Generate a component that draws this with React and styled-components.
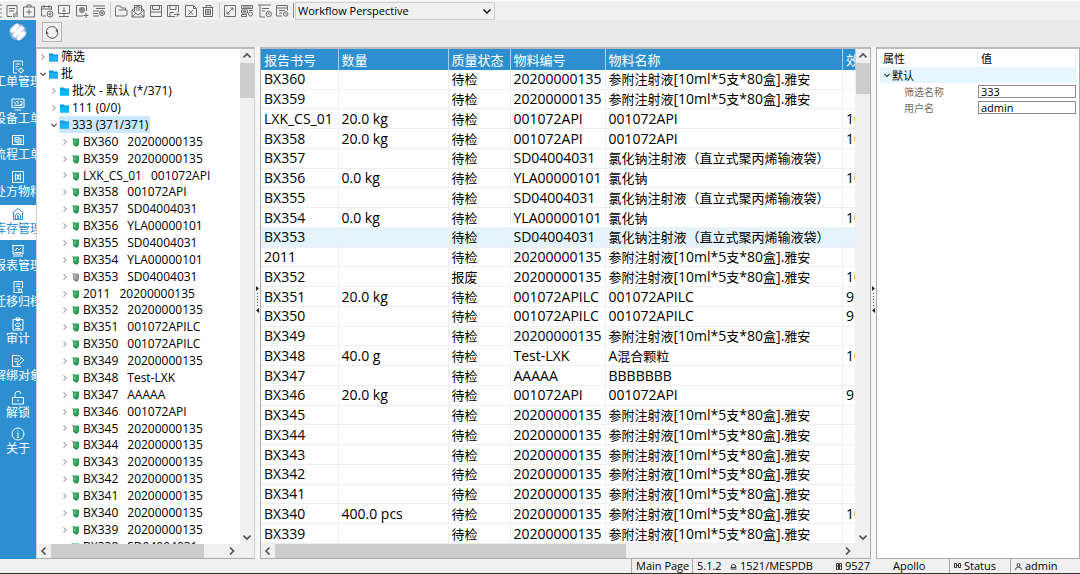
import React, { useState } from "react";
import styled, { createGlobalStyle } from "styled-components";

const GlobalStyle = createGlobalStyle`
  * { box-sizing: border-box; }
  body {
    margin: 0;
    background: #f0f0f0;
    color: #000;
    font-family: "Open Sans", "Noto Sans CJK SC", sans-serif;
    font-size: 12px;
  }
  button, input, select {
    font-family: inherit;
    color: inherit;
    margin: 0;
    padding: 0;
  }
`;

const Page = styled.div`
  display: flex;
  flex-direction: column;
  height: 100vh;
  overflow: hidden;
  border-bottom: 1px solid #333;
`;
const Toolbar = styled.header`
  display: flex;
  align-items: center;
  flex: none;
  height: 20px;
  border-top: 1px solid #fafafa;
`;
const Grip = styled.div`
  width: 3px;
  height: 14px;
  border-left: 2px dotted #b8b8b8;
`;
const ToolGroup = styled.div`
  display: grid;
  grid-template-columns: repeat(${(p) => p.$count}, 1fr);
  width: ${(p) => p.$width}px;
  height: 16px;
`;
const ToolButton = styled.button`
  display: flex;
  align-items: center;
  justify-content: center;
  border: none;
  background: none;
`;
const Separator = styled.div`
  width: 1px;
  height: 15px;
  margin: 0 1px 0 2px;
  background: ${(p) => (p.$dark ? "#8c8c8c" : "#c8c8c8")};
`;
const PerspectiveBox = styled.div`
  position: relative;
  width: 200px;
  height: 18px;
  background: #f0f0f0;
  border: 1px solid #d0d0d0;

  svg {
    position: absolute;
    right: 3px;
    top: 4px;
    pointer-events: none;
  }
`;
const PerspectiveSelect = styled.select`
  appearance: none;
  display: block;
  width: 100%;
  height: 16px;
  padding-left: 2px;
  border: none;
  background: none;
  font-size: 11px;
  line-height: 16px;
`;

const Body = styled.div`
  display: flex;
  flex: 1;
  min-height: 0;
`;
const Sidebar = styled.aside`
  flex: none;
  width: 36px;
  background: #2d8fcf;
  overflow: hidden;
`;
const Logo = styled.div`
  display: flex;
  align-items: center;
  justify-content: center;
  height: 38px;
  padding-bottom: 14px;
`;
const Nav = styled.nav`
  display: grid;
  grid-auto-rows: 1fr;
  row-gap: 2px;
  height: 402px;
`;
const NavItem = styled.button`
  display: flex;
  flex-direction: column;
  align-items: center;
  justify-content: flex-start;
  width: 36px;
  min-height: 0;
  padding-top: 2px;
  border: none;
  overflow: hidden;
  background: ${(p) => (p.$active ? "#fff" : "transparent")};
  color: ${(p) => (p.$active ? "#2d8fcf" : "#fff")};
  font-size: 12px;
  line-height: 16px;
  white-space: nowrap;

  svg {
    flex: none;
  }
`;

const Workspace = styled.div`
  display: flex;
  flex-direction: column;
  flex: 1;
  min-width: 0;
`;
const SubBar = styled.div`
  flex: none;
  height: 27px;
  padding: 2px 6px;
  background: #eaeaea;
`;
const RefreshButton = styled.button`
  display: flex;
  align-items: center;
  justify-content: center;
  width: 20px;
  height: 20px;
  background: #f0f0f0;
  border: 1px solid #b4b4b4;
`;
const Panels = styled.main`
  display: flex;
  flex: 1;
  min-height: 0;
`;
const Panel = styled.section`
  display: flex;
  flex-direction: column;
  flex: ${(p) => (p.$width ? "none" : 1)};
  width: ${(p) => (p.$width ? p.$width + "px" : "auto")};
  min-width: 0;
  background: #fff;
  border: 1px solid #a7abb2;
  border-top: 2px solid #b9bcc1;
  border-left-color: ${(p) => (p.$soft ? "#d0d0d0" : "#a7abb2")};
  border-right-color: ${(p) => (p.$soft ? "#d0d0d0" : "#a7abb2")};
`;
const Splitter = styled.div`
  display: flex;
  align-items: center;
  justify-content: center;
  flex: none;
  width: 5px;
  padding-bottom: 6px;
  background: #f7f7f7;
`;
const ScrollArea = styled.div`
  display: flex;
  flex: 1;
  min-height: 0;
`;
const Viewport = styled.div`
  flex: 1;
  min-width: 0;
  overflow: hidden;
`;
const VBar = styled.div`
  display: flex;
  flex-direction: column;
  flex: none;
  width: 14px;
  background: #f0f0f0;
`;
const HBar = styled.div`
  display: flex;
  flex: none;
  height: 14px;
  padding-right: 15px;
  background: #f0f0f0;
`;
const ScrollButton = styled.button`
  display: flex;
  align-items: center;
  justify-content: center;
  flex: none;
  width: 14px;
  height: 14px;
  border: none;
  background: none;
  color: #505050;
`;
const Track = styled.div`
  display: flex;
  flex-direction: ${(p) => (p.$vertical ? "column" : "row")};
  flex: 1;
  min-width: 0;
`;
const Thumb = styled.div`
  flex: 0 0 ${(p) => p.$size};
  background: #cdcdcd;
`;

const Tree = styled.ul`
  display: grid;
  grid-auto-rows: 1fr;
  height: calc(100% + 11px);
  margin: 0;
  padding: 0;
  list-style: none;
`;
const TreeRow = styled.li`
  display: flex;
  align-items: center;
  min-height: 0;
  padding-left: ${(p) => 1 + p.$level * 11}px;
  white-space: pre;
  line-height: 16px;
`;
const Twisty = styled.button`
  display: flex;
  align-items: center;
  justify-content: center;
  flex: none;
  width: 10px;
  height: 12px;
  border: none;
  background: none;
  color: ${(p) => (p.$open ? "#303030" : "#9a9a9a")};
`;
const TreeLabel = styled.span`
  display: flex;
  align-items: center;
  gap: 3px;
  height: 17px;
  padding: 0 2px 0 1px;
  background: ${(p) => (p.$selected ? "#cce8ff" : "transparent")};
`;
const BatchText = styled.span`
  display: flex;
  gap: 9px;
`;

const Table = styled.table`
  width: 100%;
  height: 100%;
  table-layout: fixed;
  border-collapse: collapse;
  font-size: 14px;
  line-height: 18px;
`;
const HeadCell = styled.th`
  height: 21px;
  padding: 0 0 0 3px;
  overflow: hidden;
  background: #2d8fcf;
  border-right: 1px solid #a9d0ea;
  color: #fff;
  font-weight: normal;
  text-align: left;
  white-space: nowrap;
`;
const Row = styled.tr`
  background: ${(p) => (p.$selected ? "#e5f3fc" : "#fff")};
`;
const Cell = styled.td`
  padding: 0 0 0 3px;
  overflow: hidden;
  border-right: 1px solid #eeeff4;
  border-bottom: 1px solid #eeeff4;
  white-space: nowrap;
`;
const Han = styled.span`
  font-size: 13px;
`;

const Props = styled.div`
  padding: 2px 3px;
  font-size: 10px;
`;
const PropRow = styled.div`
  display: grid;
  grid-template-columns: 98px 1fr;
  align-items: center;
  height: 16px;
  background: ${(p) => (p.$group ? "#e5f6ff" : "transparent")};
`;
const PropHead = styled.div`
  padding: 0 3px;
  border-right: 1px solid #ececec;
  font-size: 11px;
  line-height: 16px;
`;
const PropGroup = styled.div`
  display: flex;
  align-items: center;
  padding-left: 2px;
  font-size: 11px;
  line-height: 15px;
`;
const PropLabel = styled.label`
  padding-left: 24px;
  color: #6d6d6d;
`;
const PropInput = styled.input`
  min-width: 0;
  height: 13px;
  padding: 0 2px;
  border: 1px solid #8a8a8a;
  background: #fff;
  font-size: 11px;
  line-height: 12px;
`;

const StatusBar = styled.footer`
  display: flex;
  justify-content: flex-end;
  flex: none;
  height: 14px;
  background: #f0f0f0;
  font-size: 11px;
  line-height: 14px;
`;
const StatusCell = styled.div`
  display: flex;
  align-items: center;
  gap: 3px;
  width: ${(p) => p.$width}px;
  padding-left: 4px;
  border-left: 1px solid ${(p) => (p.$bare ? "transparent" : "#a8a8a8")};
  white-space: nowrap;
`;

const toolIcons = {
  order: "M2 1.5h10v7M2 1.5v11h5M4 4.5h6M4 7h5M8 10h5l-2-2M13 12H8l2 1.5",
  addCase: "M1.5 3h11v10h-11zM5 3V1h4v2M7 5.500v5M4.500 8h5",
  calendar: "M6 12H1.500V2.500h10V6M4 1v3M9 1v3M1.500 5h10M7 10a3 3 0 1 0 6 0a3 3 0 1 0-6 0M10 8.500v3M8.500 10h3",
  download: "M1.500 1.500h11v8h-11zM7 3.500v4M5.500 6L7 7.500 8.500 6M7 9.500v3M2 12.500h10",
  addGear: "M8 12H1.500V1.500h10V7M5 4h4v4H5zM7 3v6M4 6h6M11 9v5M8.500 11.500h5",
  addList: "M1 2h12M4 4.500h9M1 7h6M1 9.500h5M1 12h6M7.500 9a2.500 2.500 0 1 0 5 0a2.500 2.500 0 1 0-5 0M10 7.500v3M8.500 9h3",
  folder: "M1.500 12V3.500l1-1.500h4l1 2h4v2M1.500 12h9.500l2-1V6H4.500",
  mail: "M1 6l6-4 6 4v7H1zM1 6l6 5 6-5M3.500 7V1.500h7V7M5 4h4M5 6h4M1 13l4-4M13 13L9 9",
  save: "M1.500 1.500h11v11h-11zM3.500 1.500v4h7v-4M1.500 8h11",
  saveAs: "M9 12.500H1.500v-11h11V8M4 1.500v4h6v-4M4 12V8.500h4M8 10.500h5M11 8.500l2 2-2 2",
  remove: "M1.500 1.500h8l3 3v8h-11zM9.500 1.500v3h3M4.500 6l4.500 4.500M9 6l-4.500 4.500",
  trash: "M1.500 3.500h11M2.500 3.500v9h9v-9M5 3V1.500h5V3M4.500 5.500h5v5h-5zM7 5v6M4.500 8h5",
  expand: "M1.500 1.500h11v11h-11zM4 10l6-6M7.500 4H10v2.500M4 7.500V10h2.500",
  gridTool: "M1.500 1.500h11v3h-11zM1.500 6h6v3h-6zM1.500 10.500h5v2h-5zM3 3h8M3 7.500h3M8.500 10a2 2 0 1 0 4 0a2 2 0 1 0-4 0M9 6.500h4",
  clock: "M0 1h13M2 1v12h5M4 4.500h7M4 7h3M8 10a2.700 2.700 0 1 0 5.400 0a2.700 2.700 0 1 0-5.400 0M10.700 8.500V10l1 1",
  report: "M7 12H1.500V1.500h11v5M1.500 4h11M4 6.500h6M4 9h3M8.500 10a2.200 2.200 0 1 0 4.400 0a2.200 2.200 0 1 0-4.400 0M10 10h1.500",
};

const navIcons = {
  workOrder: "M6 13H2.500V1h9v5M4.500 4h5M4.500 6.500h3M4.500 9h2M8 10.500a2 2 0 1 0 4 0a2 2 0 1 0-4 0M10 7.500v1M10 12.500v1M7 10.500h1M12 10.500h1",
  device: "M1 2h12v8.500H1zM3.500 13h7M3 4.500l2 3M5 4.500h2v3M9 4.500h2v3H9M3 8.500h8",
  flow: "M1.500 2.500h11v9h-11zM4 4.500h4v2H4zM6 8h4v2H6zM4 7v2h2M8 5.500h2V8",
  formula: "M1.500 1.500h11v11h-11zM4.500 3.500v7M9.500 3.500v7M4.500 5h2l1 4h2M9.500 5h-2l-1 4h-2",
  stock: "M1.500 6L7 1.500 12.500 6M2.500 5.500v7h9v-7M4.500 12V8l2.500-2 2.500 2v4M6 9.500h2M6 11.500h2M7 8v4",
  chart: "M1 1.500h12M2 1.500v8.500h10V1.500M4 7l2-3 2 2 2-2M3.500 8.500h7M2 12h10",
  archive: "M10 12.500H3v-11h8.500V8M5 4h4.500M5 6.500h4M6.500 9h4v3.500M8 9v3M12 12.500H8",
  audit: "M2 2.500h10v10.500H2zM5 1h4v2.500H5zM4 8q3-4 6 0q-3 3.500-6 0M6.500 8h1M4.500 11.500h5",
  unbind: "M10 12.500H1.500v-11H8l2 2v1M3.500 5h4M3.500 7.500h3M6 11l.5-2.500L11 4l2 2-4.500 4.500z",
  unlock: "M1.500 6.500h11v6.500h-11zM4 6.500V3.500a3 3 0 0 1 6-.5M7 8.500v2",
  about: "M1 7a6 6 0 1 0 12 0a6 6 0 1 0-12 0M7 6v4.500M6 6h1M6 10.500h2M7 3.500v1",
};

const arrows = {
  right: "M2 0.500l3.500 3.500L2 7.500",
  left: "M5.500 0.500L2 4l3.500 3.500",
  down: "M0.500 2.500L4 6l3.500-3.500",
  up: "M0.500 5.500L4 2l3.500 3.500",
};

const LineIcon = ({ path, size = 14, stroke = "#6c6c6c" }) => (
  <svg width={size} height={size} viewBox="0 0 14 14" fill="none" stroke={stroke} strokeWidth="1">
    <path d={path} />
  </svg>
);

const Arrow = ({ dir, size = 8, weight = 1.6 }) => (
  <svg width={size} height={size} viewBox="0 0 8 8" fill="none" stroke="currentColor" strokeWidth={weight}>
    <path d={arrows[dir]} />
  </svg>
);

const FolderIcon = () => (
  <svg width="9" height="9" viewBox="0 0 9 9">
    <path d="M0 0.500h4l1 1h4v7H0z" fill="#0a9be0" />
    <path d="M0 3h9v5.500H0z" fill="#16b4f5" />
  </svg>
);

const BatchIcon = ({ idle }) => (
  <svg width="9" height="10" viewBox="0 0 9 10">
    <path d="M0 0.500l2 1h6v6l-1.500 1.500H3.500L2 7.500V2.500z" fill={idle ? "#999" : "#35a25c"} />
    <path d="M4 8h3l-.5 1.500h-2z" fill={idle ? "#777" : "#268049"} />
    <path d="M3 3h2v3H3z" fill={idle ? "#b4b4b4" : "#5cba7c"} />
  </svg>
);

const tools = [
  ["order", "addCase", "calendar", "download", "addGear", "addList"],
  ["folder", "mail", "save", "saveAs", "remove", "trash"],
  ["expand", "gridTool", "clock", "report"],
];

const navItems = [
  ["workOrder", "工单管理"],
  ["device", "设备工单"],
  ["flow", "流程工单"],
  ["formula", "处方物料"],
  ["stock", "库存管理"],
  ["chart", "报表管理"],
  ["archive", "迁移归档"],
  ["audit", "审计"],
  ["unbind", "解绑对象"],
  ["unlock", "解锁"],
  ["about", "关于"],
];

const INJ = "参附注射液[10ml*5支*80盒].雅安";
const SALT = "氯化钠注射液（直立式聚丙烯输液袋）";

const batches = [
  ["BX360", "", "待检", "20200000135", INJ, ""],
  ["BX359", "", "待检", "20200000135", INJ, ""],
  ["LXK_CS_01", "20.0 kg", "待检", "001072API", "001072API", "10"],
  ["BX358", "20.0 kg", "待检", "001072API", "001072API", "10"],
  ["BX357", "", "待检", "SD04004031", SALT, ""],
  ["BX356", "0.0 kg", "待检", "YLA00000101", "氯化钠", "10"],
  ["BX355", "", "待检", "SD04004031", SALT, ""],
  ["BX354", "0.0 kg", "待检", "YLA00000101", "氯化钠", "10"],
  ["BX353", "", "待检", "SD04004031", SALT, ""],
  ["2011", "", "待检", "20200000135", INJ, ""],
  ["BX352", "", "报废", "20200000135", INJ, "10"],
  ["BX351", "20.0 kg", "待检", "001072APILC", "001072APILC", "9"],
  ["BX350", "", "待检", "001072APILC", "001072APILC", "9"],
  ["BX349", "", "待检", "20200000135", INJ, ""],
  ["BX348", "40.0 g", "待检", "Test-LXK", "A混合颗粒", "10"],
  ["BX347", "", "待检", "AAAAA", "BBBBBBB", ""],
  ["BX346", "20.0 kg", "待检", "001072API", "001072API", "9"],
  ["BX345", "", "待检", "20200000135", INJ, ""],
  ["BX344", "", "待检", "20200000135", INJ, ""],
  ["BX343", "", "待检", "20200000135", INJ, ""],
  ["BX342", "", "待检", "20200000135", INJ, ""],
  ["BX341", "", "待检", "20200000135", INJ, ""],
  ["BX340", "400.0 pcs", "待检", "20200000135", INJ, "10"],
  ["BX339", "", "待检", "20200000135", INJ, ""],
];

const columns = ["报告书号", "数量", "质量状态", "物料编号", "物料名称", "效期"];

const folders = [
  { label: "筛选", level: 0 },
  { label: "批", level: 0, open: true },
  { label: "批次 - 默认 (*/371)", level: 1 },
  { label: "111 (0/0)", level: 1 },
  { label: "333 (371/371)", level: 1, open: true, selected: true },
];

// Chinese runs sit one size below the latin text
const MixedText = ({ text }) =>
  text
    .split(/([\u4e00-\u9fff\uff00-\uffef]+)/)
    .map((part, i) => (i % 2 ? <Han key={i}>{part}</Han> : part));

const VScroll = ({ thumb }) => (
  <VBar>
    <ScrollButton aria-label="Scroll up"><Arrow dir="up" /></ScrollButton>
    <Track $vertical><Thumb $size={thumb} /></Track>
    <ScrollButton aria-label="Scroll down"><Arrow dir="down" /></ScrollButton>
  </VBar>
);

const HScroll = ({ thumb }) => (
  <HBar>
    <ScrollButton aria-label="Scroll left"><Arrow dir="left" /></ScrollButton>
    <Track><Thumb $size={thumb} /></Track>
    <ScrollButton aria-label="Scroll right"><Arrow dir="right" /></ScrollButton>
  </HBar>
);

const SashHandle = () => (
  <Splitter>
    <svg width="5" height="28" viewBox="0 0 5 28">
      <path d="M1 0l3 2.500L1 5z" fill="#222" />
      <path d="M2.500 7v14" stroke="#444" strokeDasharray="1 2" />
      <path d="M4 22l-3 2.500L4 27z" fill="#222" />
    </svg>
  </Splitter>
);

const App = () => {
  const [activeNav, setActiveNav] = useState("stock");
  const [filterName, setFilterName] = useState("333");
  const [userName, setUserName] = useState("admin");

  return (
    <Page>
      <GlobalStyle />
      <Toolbar>
        <Grip />
        {tools.map((group, i) => (
          <React.Fragment key={i}>
            <ToolGroup $count={group.length} $width={group.length === 6 ? 105 : 70}>
              {group.map((name) => (
                <ToolButton key={name} aria-label={name}>
                  <LineIcon path={toolIcons[name]} />
                </ToolButton>
              ))}
            </ToolGroup>
            <Separator $dark={i === 2} />
          </React.Fragment>
        ))}
        <PerspectiveBox>
          <PerspectiveSelect aria-label="Perspective">
            <option>Workflow Perspective</option>
          </PerspectiveSelect>
          <Arrow dir="down" weight={1.4} />
        </PerspectiveBox>
      </Toolbar>

      <Body>
        <Sidebar>
          <Logo>
            <svg width="18" height="18" viewBox="0 0 18 18">
              <circle cx="9" cy="9" r="8.500" fill="#8fb0dc" />
              <g stroke="#fff" strokeLinecap="round" strokeWidth="4.500">
                <path d="M3.500 7.500L8 3M6 12L12.500 5.500M10 15L14.500 10.500" />
                <path d="M5 5.500L7 8M11 10L13 12.500" strokeWidth="3" />
              </g>
            </svg>
          </Logo>
          <Nav>
            {navItems.map(([key, label]) => (
              <NavItem key={key} $active={activeNav === key} onClick={() => setActiveNav(key)}>
                <LineIcon path={navIcons[key]} size={14} stroke="currentColor" />
                {label}
              </NavItem>
            ))}
          </Nav>
        </Sidebar>

        <Workspace>
          <SubBar>
            <RefreshButton aria-label="Refresh">
              <svg width="14" height="14" viewBox="0 0 14 14" fill="none" stroke="#555" strokeWidth="1">
                <path d="M1.500 8A5.500 5.500 0 0 1 12 5M12.500 6A5.500 5.500 0 0 1 2 9.500" />
                <path d="M13.500 4.500l-1.200 3-2-2zM0.500 9.500l1.200-3 2 2z" fill="#555" stroke="none" />
              </svg>
            </RefreshButton>
          </SubBar>
          <Panels>
            <Panel $width={219} $soft>
              <ScrollArea>
                <Viewport>
                  <Tree role="tree">
                    {folders.map((f) => (
                      <TreeRow key={f.label} role="treeitem" $level={f.level}>
                        <Twisty $open={f.open} aria-label={"Toggle " + f.label}>
                          <Arrow dir={f.open ? "down" : "right"} size={6} weight={1.4} />
                        </Twisty>
                        <TreeLabel $selected={f.selected}>
                          <FolderIcon />
                          {f.label}
                        </TreeLabel>
                      </TreeRow>
                    ))}
                    {[...batches, ["BX338", "", "", "SD04004031"]].map((b) => (
                      <TreeRow key={b[0]} role="treeitem" $level={2}>
                        <Twisty aria-label={"Toggle " + b[0]}>
                          <Arrow dir="right" size={6} weight={1.4} />
                        </Twisty>
                        <TreeLabel>
                          <BatchIcon idle={b[0] === "BX353"} />
                          <BatchText>
                            <span>{b[0]}</span>
                            <span>{b[3]}</span>
                          </BatchText>
                        </TreeLabel>
                      </TreeRow>
                    ))}
                  </Tree>
                </Viewport>
                <VScroll thumb="35px" />
              </ScrollArea>
              <HScroll thumb="88%" />
            </Panel>

            <SashHandle />

            <Panel>
              <ScrollArea>
                <Viewport>
                  <Table>
                    <colgroup>
                      <col style={{ width: 77 }} />
                      <col style={{ width: 110 }} />
                      <col style={{ width: 62 }} />
                      <col style={{ width: 95 }} />
                      <col />
                      <col style={{ width: 13 }} />
                    </colgroup>
                    <thead>
                      <tr>
                        {columns.map((c) => (
                          <HeadCell key={c}><MixedText text={c} /></HeadCell>
                        ))}
                      </tr>
                    </thead>
                    <tbody>
                      {batches.map((b) => (
                        <Row key={b[0]} $selected={b[0] === "BX353"}>
                          {b.map((value, i) => (
                            <Cell key={i}><MixedText text={value} /></Cell>
                          ))}
                        </Row>
                      ))}
                    </tbody>
                  </Table>
                </Viewport>
                <VScroll thumb="31px" />
              </ScrollArea>
              <HScroll thumb="62%" />
            </Panel>

            <SashHandle />

            <Panel $width={204}>
              <Props>
                <PropRow>
                  <PropHead>属性</PropHead>
                  <PropHead>值</PropHead>
                </PropRow>
                <PropRow $group>
                  <PropGroup>
                    <Twisty $open aria-label="Toggle 默认"><Arrow dir="down" size={6} /></Twisty>
                    默认
                  </PropGroup>
                </PropRow>
                <PropRow>
                  <PropLabel htmlFor="filterName">筛选名称</PropLabel>
                  <PropInput id="filterName" value={filterName} onChange={(e) => setFilterName(e.target.value)} />
                </PropRow>
                <PropRow>
                  <PropLabel htmlFor="userName">用户名</PropLabel>
                  <PropInput id="userName" value={userName} onChange={(e) => setUserName(e.target.value)} />
                </PropRow>
              </Props>
            </Panel>
          </Panels>
        </Workspace>
      </Body>

      <StatusBar>
        <StatusCell $width={61}>Main Page</StatusCell>
        <StatusCell $width={33}>5.1.2</StatusCell>
        <StatusCell $width={106} $bare>
          <svg width="7" height="7" viewBox="0 0 7 7" fill="none" stroke="#333">
            <path d="M1 4.500q0-3 2.500-3t2.500 3zM0.500 6h6" />
          </svg>
          1521/MESPDB
        </StatusCell>
        <StatusCell $width={57} $bare>
          <svg width="6" height="7" viewBox="0 0 6 7" fill="none" stroke="#333">
            <path d="M0.500 0.500h2v6h-2zM3.500 0.500h2v6h-2zM0 3h6" />
          </svg>
          9527
        </StatusCell>
        <StatusCell $width={61} $bare>Apollo</StatusCell>
        <StatusCell $width={61}>
          <svg width="7" height="6" viewBox="0 0 7 6" fill="none" stroke="#333">
            <path d="M0.500 0.500v4h2v-4zM4.500 0.500v4h2v-4zM2 2.500h3" />
          </svg>
          Status
        </StatusCell>
        <StatusCell $width={70}>
          <svg width="7" height="7" viewBox="0 0 7 7" fill="none" stroke="#444">
            <circle cx="3.500" cy="2" r="1.500" />
            <path d="M0.500 7q0-3 3-3t3 3" />
          </svg>
          admin
        </StatusCell>
      </StatusBar>
    </Page>
  );
};

export default App;
